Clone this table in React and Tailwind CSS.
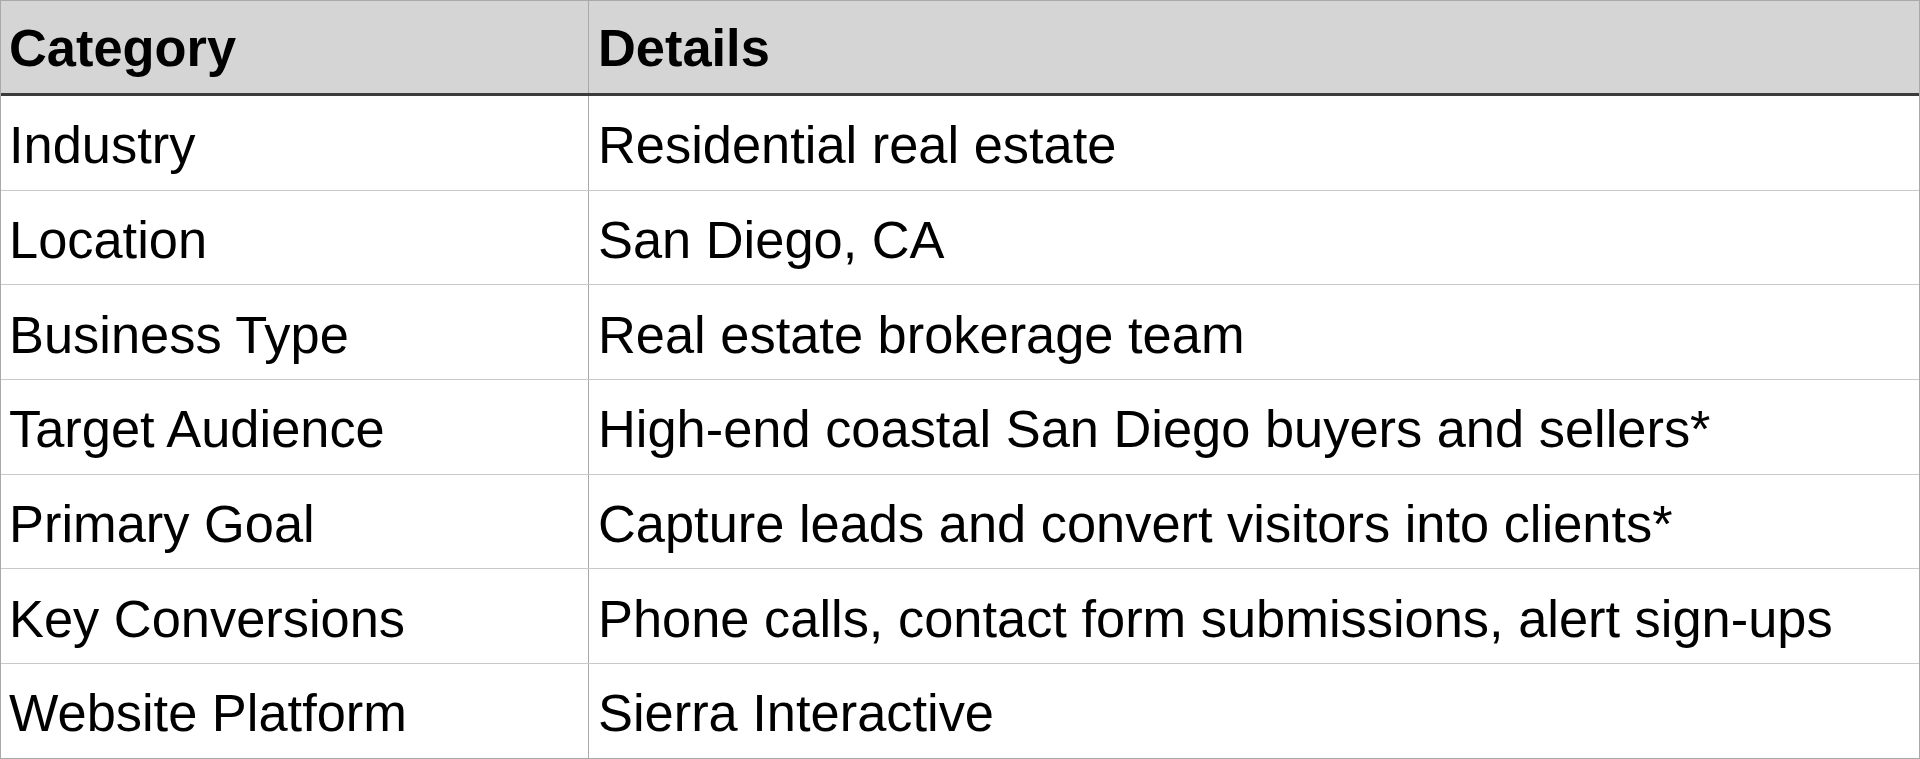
import React from 'react';

const rows = [
  ['Industry', 'Residential real estate'],
  ['Location', 'San Diego, CA'],
  ['Business Type', 'Real estate brokerage team'],
  ['Target Audience', 'High-end coastal San Diego buyers and sellers*'],
  ['Primary Goal', 'Capture leads and convert visitors into clients*'],
  ['Key Conversions', 'Phone calls, contact form submissions, alert sign-ups'],
  ['Website Platform', 'Sierra Interactive'],
];

const App = () => {
  return (
    <div
      className="w-[1920px] h-[759px] bg-white text-black text-[52.4px] leading-none overflow-hidden"
      style={{ fontFamily: '"Liberation Sans", Arial, sans-serif' }}
    >
      <div className="border-t border-l border-r border-[#a9a9a9]">
        {/* header */}
        <div className="grid grid-cols-[588px_1fr] h-[95px] bg-[#d5d5d5] border-b-[3px] border-[#3b3b3b] font-bold">
          <div className="flex items-center pl-[8px] pt-[2px] border-r border-[#a9a9a9]">Category</div>
          <div className="flex items-center pl-[9px] pt-[2px]">Details</div>
        </div>

        {rows.map(([cat, detail], i) => (
          <div
            key={cat}
            className={`grid grid-cols-[588px_1fr] h-[94.7px] border-b ${
              i === rows.length - 1 ? 'border-[#a9a9a9]' : 'border-[#c9c9c9]'
            }`}
          >
            <div className="flex items-center pl-[8px] pt-[5px] border-r border-[#a9a9a9]">{cat}</div>
            <div className="flex items-center pl-[9px] pt-[5px]">{detail}</div>
          </div>
        ))}
      </div>
    </div>
  );
};

export default App;
